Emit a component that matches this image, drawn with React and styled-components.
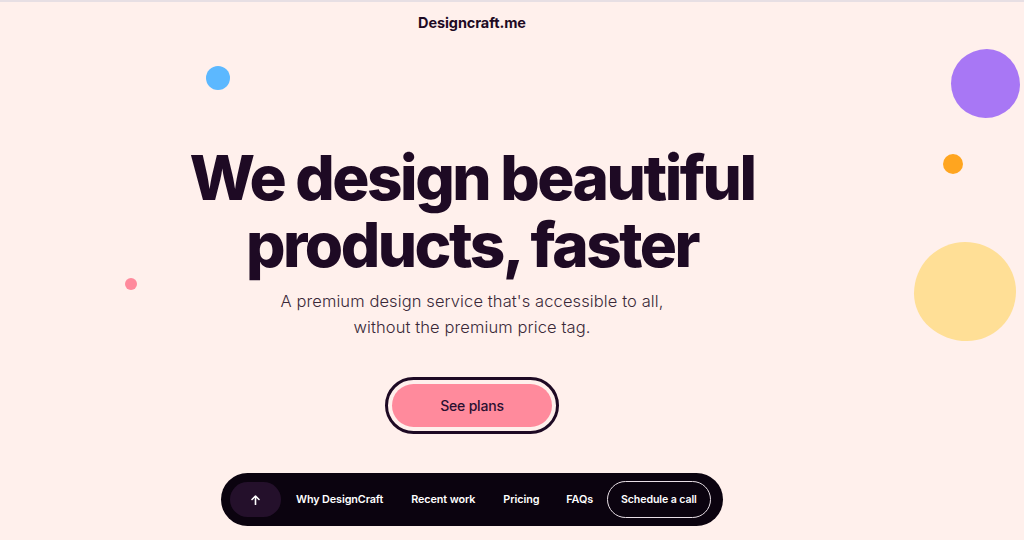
import React from "react";
import styled, { createGlobalStyle } from "styled-components";

const Global = createGlobalStyle`
  html, body { margin: 0; padding: 0; }
  body {
    background: #fff0ec;
    font-family: Inter, "Noto Sans", sans-serif;
    color: #1e0a24;
    overflow: hidden;
  }
`;

const Page = styled.div`
  position: relative;
  width: 1024px;
  height: 540px;
  border-top: 2px solid #e7dfe4;
  box-sizing: border-box;
  padding-right: 80px;
  display: flex;
  flex-direction: column;
  align-items: center;
  overflow: hidden;
`;

const Brand = styled.div`
  margin-top: 12px;
  font-size: 14.5px;
  font-weight: 700;
  letter-spacing: -0.1px;
  color: #1e0a24;
  line-height: 18px;
`;

const Heading = styled.h1`
  margin: 112px 0 0;
  font-size: 62px;
  font-weight: 800;
  letter-spacing: -2.5px;
  line-height: 67px;
  text-align: center;
  color: #1e0a24;
`;

const Sub = styled.p`
  margin: 10px 0 0;
  font-size: 16.5px;
  font-weight: 300;
  line-height: 26px;
  text-align: center;
  color: #3a2838;
  letter-spacing: 0.1px;
`;

const CtaRing = styled.div`
  margin-top: 37px;
  padding: 4px;
  border: 3px solid #1e0a24;
  border-radius: 999px;
  display: flex;
`;

const CtaButton = styled.button`
  width: 160px;
  height: 43px;
  border: none;
  border-radius: 999px;
  background: #ff8a9c;
  color: #2a1030;
  font-family: Inter, sans-serif;
  font-size: 14px;
  font-weight: 500;
  letter-spacing: -0.2px;
  cursor: pointer;
`;

const Nav = styled.nav`
  margin-top: 39px;
  width: 502px;
  height: 53px;
  box-sizing: border-box;
  background: #0b030f;
  border-radius: 999px;
  display: flex;
  align-items: center;
  padding: 0 9px;
`;

const UpButton = styled.button`
  flex: none;
  width: 51px;
  height: 35px;
  padding: 0;
  border: none;
  border-radius: 999px;
  background: #24102b;
  color: #fff;
  display: flex;
  align-items: center;
  justify-content: center;
  cursor: pointer;
  margin-right: 15px;
`;

const NavLink = styled.a`
  flex: none;
  color: #fff;
  font-size: 10.8px;
  font-weight: 600;
  letter-spacing: -0.1px;
  text-decoration: none;
  margin-right: ${(p) => p.$gap}px;
  white-space: nowrap;
`;

const CallButton = styled.a`
  flex: none;
  height: 37px;
  box-sizing: border-box;
  padding: 0 13px;
  border: 1.5px solid #e8dfe6;
  border-radius: 999px;
  display: flex;
  align-items: center;
  color: #fff;
  font-size: 10.6px;
  font-weight: 600;
  letter-spacing: -0.1px;
  text-decoration: none;
  white-space: nowrap;
`;

const Blob = styled.div`
  position: absolute;
  left: ${(p) => p.$x}px;
  top: ${(p) => p.$y}px;
  width: ${(p) => p.$w}px;
  height: ${(p) => p.$h}px;
  background: ${(p) => p.$c};
  border-radius: ${(p) => p.$r || "50%"};
`;

export default function App() {
  return (
    <>
      <Global />
      <Page>
        <Blob $x={206} $y={64} $w={24} $h={24} $c="#5cb8ff" />
        <Blob $x={125} $y={276} $w={12} $h={12} $c="#ff8a9c" />
        <Blob $x={943} $y={152} $w={20} $h={20} $c="#ffa51f" />
        <Blob $x={951} $y={47} $w={69} $h={69} $c="#a877f5" $r="52% 48% 50% 50% / 50% 52% 48% 50%" />
        <Blob $x={914} $y={240} $w={102} $h={99} $c="#ffdf96" $r="50% 50% 48% 52% / 52% 50% 50% 48%" />
        <Brand>Designcraft.me</Brand>
        <Heading>
          We design beautiful
          <br />
          products, faster
        </Heading>
        <Sub>
          A premium design service that's accessible to all,
          <br />
          without the premium price tag.
        </Sub>
        <CtaRing>
          <CtaButton>See plans</CtaButton>
        </CtaRing>
        <Nav>
          <UpButton aria-label="Back to top">
            <svg width="9" height="10" viewBox="0 0 9 10" fill="none">
              <path d="M4.5 9.5V1.2M1 4.5L4.5 1L8 4.5" stroke="#fff" strokeWidth="1.6" strokeLinecap="round" strokeLinejoin="round" />
            </svg>
          </UpButton>
          <NavLink $gap={28} href="#">Why DesignCraft</NavLink>
          <NavLink $gap={28} href="#">Recent work</NavLink>
          <NavLink $gap={27} href="#">Pricing</NavLink>
          <NavLink $gap={14} href="#">FAQs</NavLink>
          <CallButton href="#">Schedule a call</CallButton>
        </Nav>
      </Page>
    </>
  );
}
